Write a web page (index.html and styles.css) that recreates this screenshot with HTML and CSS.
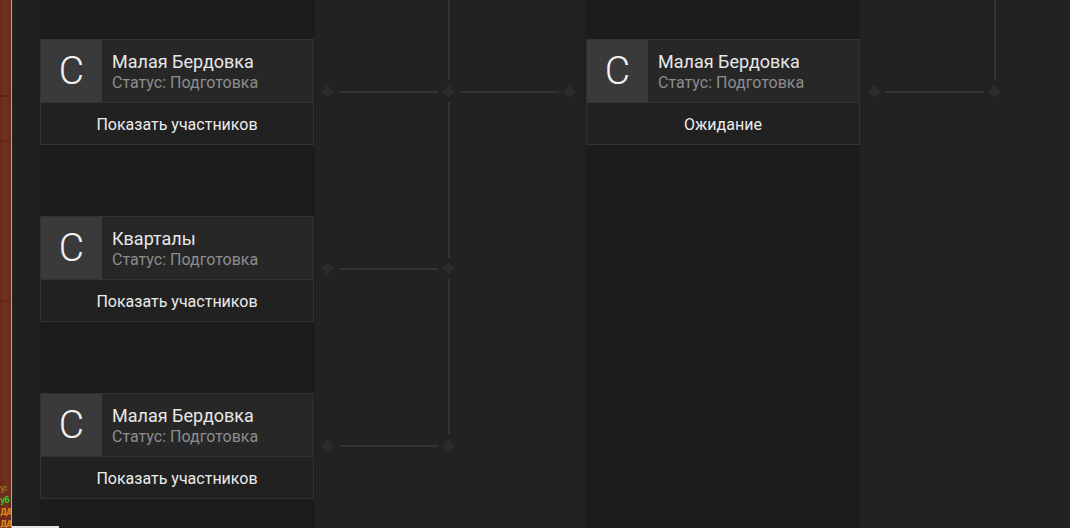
FILE: index.html
```html
<!DOCTYPE html>
<html lang="ru">
<head>
<meta charset="utf-8">
<link rel="stylesheet" href="styles.css">
</head>
<body>
<div class="screen">
  <div class="wood">
    <div class="chat">
      <span class="c1">у:</span>
      <span class="c2">уб</span>
      <span class="c3">ДА</span>
      <span class="c3">ДА</span>
    </div>
  </div>
  <div class="panel">
    <div class="gutter"></div>
    <div class="col col-dark">
      <div class="card">
        <div class="card-top">
          <div class="avatar">C</div>
          <div class="info"><div class="name">Малая Бердовка</div><div class="status">Статус: Подготовка</div></div>
        </div>
        <div class="card-bottom">Показать участников</div>
      </div>
      <div class="card">
        <div class="card-top">
          <div class="avatar">C</div>
          <div class="info"><div class="name">Кварталы</div><div class="status">Статус: Подготовка</div></div>
        </div>
        <div class="card-bottom">Показать участников</div>
      </div>
      <div class="card">
        <div class="card-top">
          <div class="avatar">C</div>
          <div class="info"><div class="name">Малая Бердовка</div><div class="status">Статус: Подготовка</div></div>
        </div>
        <div class="card-bottom">Показать участников</div>
      </div>
    </div>
    <div class="col col-light links">
      <svg width="270" height="528" viewBox="0 0 270 528">
        <g fill="#333333">
          <rect x="133" y="0" width="2" height="80"/>
          <rect x="133" y="102" width="2" height="156"/>
          <rect x="133" y="279" width="2" height="155"/>
          <rect x="24" y="91" width="99" height="2"/>
          <rect x="145" y="91" width="99" height="2"/>
          <rect x="24" y="268" width="99" height="2"/>
          <rect x="24" y="445" width="99" height="2"/>
        </g>
        <g fill="#2c2c2c">
          <rect x="8" y="87" width="9" height="9" transform="rotate(45 12.5 91.5)"/>
          <rect x="129" y="87" width="9" height="9" transform="rotate(45 133.5 91.5)"/>
          <rect x="250" y="87" width="9" height="9" transform="rotate(45 254.5 91.5)"/>
          <rect x="8" y="264" width="9" height="9" transform="rotate(45 12.5 268.5)"/>
          <rect x="129" y="264" width="9" height="9" transform="rotate(45 133.5 268.5)"/>
          <rect x="8" y="441" width="9" height="9" transform="rotate(45 12.5 445.5)"/>
          <rect x="129" y="441" width="9" height="9" transform="rotate(45 133.5 445.5)"/>
        </g>
      </svg>
    </div>
    <div class="col col-dark col-third">
      <div class="card">
        <div class="card-top">
          <div class="avatar">C</div>
          <div class="info"><div class="name">Малая Бердовка</div><div class="status">Статус: Подготовка</div></div>
        </div>
        <div class="card-bottom">Ожидание</div>
      </div>
    </div>
    <div class="col col-light col-last links">
      <svg width="210" height="528" viewBox="0 0 210 528">
        <g fill="#333333">
          <rect x="134" y="0" width="2" height="80"/>
          <rect x="25" y="91" width="99" height="2"/>
        </g>
        <g fill="#2c2c2c">
          <rect x="10" y="87" width="9" height="9" transform="rotate(45 14.5 91.5)"/>
          <rect x="130" y="87" width="9" height="9" transform="rotate(45 134.5 91.5)"/>
        </g>
      </svg>
    </div>
  </div>
  <div class="scrollbar"></div>
</div>
</body>
</html>
```

FILE: styles.css
```css
* { box-sizing: border-box; }
html, body { margin: 0; padding: 0; }
body {
  width: 1070px;
  height: 528px;
  overflow: hidden;
  background: #1c1c1c;
  font-family: Roboto, "Noto Sans", "DejaVu Sans", sans-serif;
}
.screen {
  position: relative;
  display: flex;
  width: 1070px;
  height: 528px;
}
.wood {
  position: relative;
  width: 12px;
  flex: none;
  border-right: 1px solid #c9a599;
  background:
    linear-gradient(180deg, transparent 0 95px, rgba(0,0,0,0.18) 95px 97px, transparent 97px 140px, rgba(0,0,0,0.15) 140px 142px, transparent 142px 300px, rgba(0,0,0,0.15) 300px 302px, transparent 302px),
    linear-gradient(90deg, #6a2818, #74301f 50%, #6a2919);
  overflow: hidden;
}
.chat {
  position: absolute;
  left: 0;
  top: 482px;
  display: flex;
  flex-direction: column;
  font-family: "DejaVu Sans Condensed", "DejaVu Sans", sans-serif;
  font-size: 9px;
  line-height: 12px;
  font-weight: bold;
  letter-spacing: -1px;
}
.c1 { color: #8a7a20; }
.c2 { color: #2fc12f; }
.c3 { color: #d9821d; }
.panel {
  display: flex;
  flex: 1;
  height: 528px;
}
.gutter {
  width: 28px;
  flex: none;
  background: #202020;
}
.col {
  flex: none;
  height: 528px;
  display: flex;
  flex-direction: column;
  gap: 71px;
  padding-top: 39px;
}
.col-dark {
  width: 275px;
  background: #1c1c1c;
}
.col-third {
  padding-left: 1px;
}
.col-light {
  width: 270px;
  background: #222222;
}
.col-last {
  width: 210px;
}
.links { padding-top: 0; }
.links svg { display: block; }
.card {
  width: 274px;
  border: 1px solid #323232;
  background: #212121;
}
.card-top {
  display: flex;
  height: 63px;
  background: #272727;
  border-bottom: 1px solid #323232;
}
.avatar {
  width: 61px;
  flex: none;
  background: #3a3a3a;
  color: #f2f2f2;
  font-size: 39px;
  font-weight: 300;
  display: flex;
  align-items: center;
  justify-content: center;
}
.info {
  padding-left: 10px;
  padding-top: 11px;
  display: flex;
  flex-direction: column;
}
.name {
  color: #e8e8e8;
  font-size: 18px;
  line-height: 21px;
}
.status {
  color: #8d8d8d;
  font-size: 16px;
  line-height: 21px;
}
.card-bottom {
  height: 41px;
  padding-top: 2px;
  display: flex;
  align-items: center;
  justify-content: center;
  color: #ececec;
  font-size: 16px;
}
.scrollbar {
  position: absolute;
  left: 12px;
  bottom: 0;
  width: 47px;
  height: 2px;
  background: #e6e6e6;
}
```
